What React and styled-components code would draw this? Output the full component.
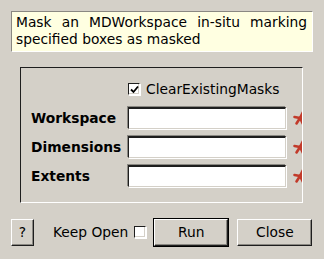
import React from "react";
import styled, { createGlobalStyle } from "styled-components";

const GLOBAL = createGlobalStyle`
  html, body {
    margin: 0;
    padding: 0;
    background: #d4d0c8;
  }
  body {
    font-family: "DejaVu Sans", sans-serif;
    font-size: 13.8px;
    color: #000;
  }
`;

const WRAP = styled.div`
  width: 324px;
  height: 259px;
  box-sizing: border-box;
  padding: 11px 11px 0 11px;
  display: flex;
  flex-direction: column;
`;

const DESC = styled.div`
  box-sizing: border-box;
  height: 41px;
  padding: 2px 5px 0 4px;
  background: #ffffe1;
  border-top: 1px solid #8a8882;
  border-left: 1px solid #8a8882;
  border-right: 1px solid #ffffff;
  border-bottom: 1px solid #ffffff;
  text-align: justify;
  line-height: 17px;
`;

const FRAME = styled.div`
  box-sizing: border-box;
  margin: 15px 10px 0 9px;
  height: 136px;
  overflow: hidden;
  border-top: 1px solid #1e1e1e;
  border-left: 1px solid #1e1e1e;
  border-right: 1px solid #ffffff;
  border-bottom: 1px solid #ffffff;
  padding: 10px 0 0 10px;
  display: grid;
  grid-template-columns: 97px 158px 1fr;
  grid-auto-rows: 22px;
  row-gap: 7px;
  align-items: center;
`;

const CHECKROW = styled.label`
  grid-column: 2 / 4;
  display: flex;
  align-items: center;
  gap: 6px;
  white-space: nowrap;
`;

const BOX = styled.span`
  box-sizing: border-box;
  width: 12px;
  height: 12px;
  flex: none;
  background: #fff;
  border-top: 1px solid #1e1e1e;
  border-left: 1px solid #1e1e1e;
  border-right: 1px solid #ffffff;
  border-bottom: 1px solid #ffffff;
  box-shadow: inset -1px -1px 0 #d4d0c8, 1px 1px 0 #fff;
  display: flex;
  align-items: center;
  justify-content: center;
`;

const LABEL = styled.span`
  font-weight: bold;
  white-space: nowrap;
`;

const INPUT = styled.div`
  box-sizing: border-box;
  height: 22px;
  background: #fff;
  border-top: 2px solid #1e1e1e;
  border-left: 1px solid #1e1e1e;
  border-right: 1px solid #d4d0c8;
  border-bottom: 1px solid #d4d0c8;
  box-shadow: 1px 1px 0 #ffffff, -1px -1px 0 #8a8882;
`;

const STAR = styled.div`
  margin-left: 6px;
  width: 16px;
  height: 16px;
  display: flex;
`;

const BOTTOM = styled.div`
  display: flex;
  align-items: center;
  margin-top: 14px;
  height: 30px;
`;

const BUTTON = styled.div`
  box-sizing: border-box;
  height: 27px;
  width: ${p => p.w}px;
  flex: none;
  display: flex;
  align-items: center;
  justify-content: center;
  background: #d4d0c8;
  border-top: 1px solid #ffffff;
  border-left: 1px solid #ffffff;
  border-right: 1px solid #1e1e1e;
  border-bottom: 1px solid #1e1e1e;
  box-shadow: inset -1px -1px 0 #8a8882;
  outline: ${p => (p.def ? "1px solid #000" : "none")};
  outline-offset: 0;
  margin-left: ${p => p.ml || 0}px;
`;

const KEEP = styled.label`
  display: flex;
  align-items: center;
  gap: 6px;
  margin: 0 8px 0 19px;
  white-space: nowrap;
`;

const Star = () => (
  <svg width="16" height="16" viewBox="0 0 16 16">
    <g stroke="#c23a2a" strokeWidth="2.6" strokeLinecap="round">
      <line x1="8" y1="8" x2="11" y2="2" />
      <line x1="8" y1="8" x2="2.5" y2="7" />
      <line x1="8" y1="8" x2="4.5" y2="13.5" />
      <line x1="8" y1="8" x2="14" y2="10" />
      <line x1="8" y1="8" x2="11" y2="14" />
    </g>
  </svg>
);

const Check = () => (
  <svg width="9" height="9" viewBox="0 0 9 9">
    <path d="M1 4.5 L3.5 7 L8 1.5" fill="none" stroke="#000" strokeWidth="1.8" />
  </svg>
);

const App = () => {
  const fields = ["Workspace", "Dimensions", "Extents"];
  return (
    <WRAP>
      <GLOBAL />
      <DESC>
        Mask an MDWorkspace in-situ marking specified boxes as masked
      </DESC>
      <FRAME>
        <CHECKROW>
          <BOX>
            <Check />
          </BOX>
          ClearExistingMasks
        </CHECKROW>
        {fields.map(name => (
          <React.Fragment key={name}>
            <LABEL>{name}</LABEL>
            <INPUT />
            <STAR>
              <Star />
            </STAR>
          </React.Fragment>
        ))}
      </FRAME>
      <BOTTOM>
        <BUTTON w={23}>?</BUTTON>
        <KEEP>
          Keep Open
          <BOX />
        </KEEP>
        <BUTTON w={74} def>
          Run
        </BUTTON>
        <BUTTON w={75} ml={9}>
          Close
        </BUTTON>
      </BOTTOM>
    </WRAP>
  );
};

export default App;
